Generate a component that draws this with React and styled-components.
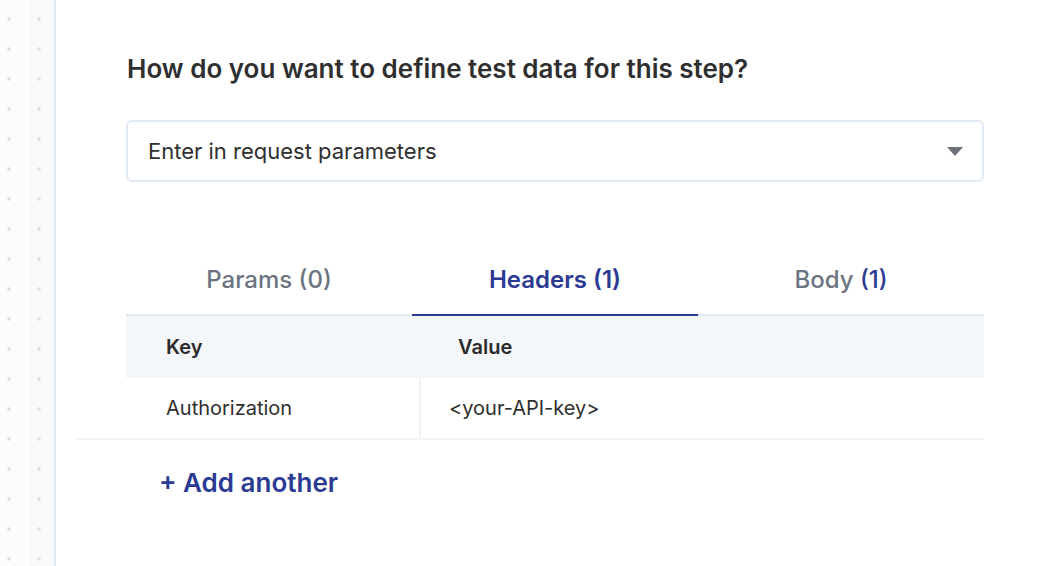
import React from 'react'
import styled, { createGlobalStyle } from 'styled-components'

const Global = createGlobalStyle`
  body {
    margin: 0;
    background: #fff;
    font-family: Inter, "Noto Sans", sans-serif;
    color: #2f2f2f;
  }
`

const Page = styled.div`
  display: flex;
  height: 566px;
  overflow: hidden;
`

const Sidebar = styled.aside`
  width: 54px;
  flex-shrink: 0;
  border-right: 2px solid #e1e9f4;
  background-color: #fafbfc;
  background-image:
    radial-gradient(circle, #dadada 1.4px, transparent 1.8px),
    linear-gradient(to right, #fcfcfc 0 30px, #f8f9fb 30px);
  background-size: 30px 30px, 100% 100%;
  background-position: -6px 4px, 0 0;
`

const Main = styled.main`
  flex: 1;
  padding: 52px 58px 0 70px;
`

const Question = styled.h2`
  margin: 0 0 34px 1px;
  font-size: 26px;
  font-weight: 600;
  line-height: 34px;
  color: #2f2f2f;
`

const Select = styled.div`
  display: flex;
  align-items: center;
  justify-content: space-between;
  height: 58px;
  padding: 0 19px 0 20px;
  border: 2px solid #e1e9f4;
  border-radius: 6px;
  font-size: 22px;
  color: #2f2f2f;
`

const Caret = styled.span`
  width: 0;
  height: 0;
  border-left: 8px solid transparent;
  border-right: 8px solid transparent;
  border-top: 9px solid #6b7079;
`

const Tabs = styled.div`
  display: grid;
  grid-template-columns: repeat(3, 1fr);
  margin-top: 67px;
  border-bottom: 2px solid #e1e9f4;
`

const Tab = styled.div`
  text-align: center;
  font-size: 24px;
  font-weight: ${(p) => (p.$active ? 600 : 500)};
  line-height: 34px;
  padding: 14px 0 17px;
  color: ${(p) => (p.$active ? '#2b3a93' : '#6c7480')};
  margin-bottom: -2px;
  border-bottom: 2px solid ${(p) => (p.$active ? '#2b3a93' : 'transparent')};
`

const Count = styled.span`
  color: #2b3a93;
`

const HeadRow = styled.div`
  display: grid;
  grid-template-columns: 292px 1fr;
  height: 62px;
  align-items: center;
  background: #f4f7f9;
  font-size: 20px;
  font-weight: 600;
  color: #2a2a2a;
  padding-left: 40px;
`

const DataRow = styled.div`
  display: grid;
  grid-template-columns: 345px 1fr;
  height: 60px;
  margin-left: -50px;
  border-bottom: 2px solid #f1f5f7;
  font-size: 20px;
  color: #2f2f2f;
`

const Cell = styled.div`
  display: flex;
  align-items: center;
  padding-left: ${(p) => p.$pad}px;
  border-right: ${(p) => (p.$divider ? '2px solid #eff3f6' : 'none')};
`

const AddLink = styled.button`
  margin: 27px 0 0 33px;
  padding: 0;
  border: none;
  background: none;
  font-family: inherit;
  font-size: 26px;
  font-weight: 600;
  color: #2b3a93;
  cursor: pointer;
`

export default function App() {
  return (
    <>
      <Global />
      <Page>
        <Sidebar />
        <Main>
          <Question>How do you want to define test data for this step?</Question>
          <Select>
            <span>Enter in request parameters</span>
            <Caret />
          </Select>
          <Tabs>
            <Tab>Params (0)</Tab>
            <Tab $active>Headers (1)</Tab>
            <Tab>
              Body <Count>(1)</Count>
            </Tab>
          </Tabs>
          <HeadRow>
            <span>Key</span>
            <span>Value</span>
          </HeadRow>
          <DataRow>
            <Cell $pad={90} $divider>Authorization</Cell>
            <Cell $pad={28}>&lt;your-API-key&gt;</Cell>
          </DataRow>
          <AddLink>+ Add another</AddLink>
        </Main>
      </Page>
    </>
  )
}
